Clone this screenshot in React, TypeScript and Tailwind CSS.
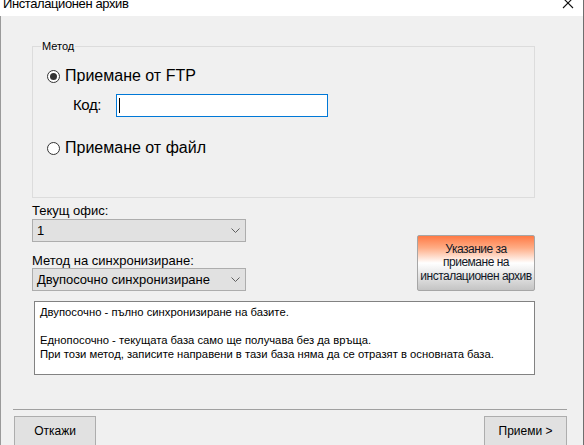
import React from "react";

function Radio({ checked }: { checked: boolean }) {
  return (
    <span className="w-[13px] h-[13px] rounded-full border border-[#333333] bg-white flex items-center justify-center shrink-0">
      {checked && <span className="w-[7px] h-[7px] rounded-full bg-[#333333]" />}
    </span>
  );
}

function Chevron() {
  return (
    <svg width="9" height="5" viewBox="0 0 9 5" className="shrink-0">
      <path d="M0.5 0.5 L4.5 4.5 L8.5 0.5" fill="none" stroke="#5f5f5f" strokeWidth="1" />
    </svg>
  );
}

function Select({ value }: { value: string }) {
  return (
    <div className="w-[214px] h-[23px] bg-[#e1e1e1] border border-[#adadad] flex items-center justify-between pl-[4px] pr-[5px] text-[13px] text-black">
      <span>{value}</span>
      <Chevron />
    </div>
  );
}

export default function App() {
  return (
    <div
      className="w-[584px] h-[445px] overflow-hidden flex flex-col bg-[#f0f0f0] text-black"
      style={{ fontFamily: '"Liberation Sans", Arial, sans-serif' }}
    >
      {/* title bar */}
      <div className="h-[16px] bg-white flex justify-between shrink-0 overflow-hidden border-r border-[#6e6e6e]">
        <span className="ml-[3px] -mt-[3px] text-[13px] leading-[13px] tracking-[-0.4px] text-black whitespace-nowrap">
          Инсталационен архив
        </span>
        <svg width="12" height="12" viewBox="0 0 12 12" className="mr-[9px] -mt-[3px]">
          <path d="M1 1 L11 11 M11 1 L1 11" stroke="#111" strokeWidth="1.1" fill="none" />
        </svg>
      </div>

      {/* body */}
      <div className="flex-1 flex flex-col border-l border-r border-l-[#9a9a9a] border-r-[#6e6e6e]">
        {/* group box */}
        <div className="relative mt-[30px] ml-[31px] w-[503px] h-[152px] border border-[#dcdcdc] flex flex-col pl-[14px] pt-[19px]">
          <span className="absolute left-[8px] -top-[8px] px-[1px] bg-[#f0f0f0] text-[11px] leading-[14px] text-black">
            Метод
          </span>
          <div className="h-[20px] flex items-center gap-[5px]">
            <Radio checked />
            <span className="text-[16px]">Приемане от FTP</span>
          </div>
          <div className="mt-[8px] h-[23px] flex items-center">
            <span className="ml-[26px] w-[43px] text-[15px] tracking-[-0.4px]">Код:</span>
            <div className="w-[212px] h-[23px] bg-white border border-[#0078d7] flex items-center pl-[2px]">
              <span className="w-[1px] h-[15px] bg-black" />
            </div>
          </div>
          <div className="mt-[21px] h-[20px] flex items-center gap-[5px]">
            <Radio checked={false} />
            <span className="text-[16px]">Приемане от файл</span>
          </div>
        </div>

        {/* selects + orange button */}
        <div className="ml-[31px] w-[503px] mt-[5px] flex items-end justify-between">
          <div className="flex flex-col">
            <span className="text-[13px] leading-[15px] mb-[1px]">Текущ офис:</span>
            <Select value="1" />
            <span className="mt-[11px] text-[13px] leading-[15px]">Метод на синхронизиране:</span>
            <Select value="Двупосочно синхронизиране" />
          </div>
          <div className="w-[118px] h-[56px] rounded-[2px] border border-[#a6a6a6] bg-[linear-gradient(to_bottom,#ff7a45_0%,#ffac85_22%,#ffffff_50%,#e6e6e6_72%,#c4c4c4_100%)] flex flex-col items-center justify-center text-[12px] leading-[13.5px] text-[#111827] text-center tracking-[-0.5px] whitespace-nowrap">
            <span>Указание за</span>
            <span>приемане на</span>
            <span>инсталационен архив</span>
          </div>
        </div>

        {/* description */}
        <div className="ml-[33px] w-[501px] h-[74px] mt-[10px] bg-white border border-[#828282] px-[5px] pt-[3px] text-[11.25px] leading-[14px] text-black">
          <div>Двупосочно - пълно синхронизиране на базите.</div>
          <div className="h-[14px]" />
          <div>Еднопосочно - текущата база само ще получава без да връща.</div>
          <div>При този метод, записите направени в тази база няма да се отразят в основната база.</div>
        </div>

        {/* separator */}
        <div className="ml-[12px] w-[554px] mt-[34px] h-[1px] bg-[#a0a0a0] shrink-0" />

        {/* bottom buttons */}
        <div className="ml-[13px] w-[553px] mt-[6px] flex justify-between">
          <div className="w-[82px] h-[30px] bg-[#e1e1e1] border border-[#adadad] flex items-center justify-center text-[12px]">
            Откажи
          </div>
          <div className="w-[83px] h-[30px] bg-[#e1e1e1] border border-[#adadad] flex items-center justify-center text-[12px]">
            Приеми &gt;
          </div>
        </div>
      </div>
    </div>
  );
}
